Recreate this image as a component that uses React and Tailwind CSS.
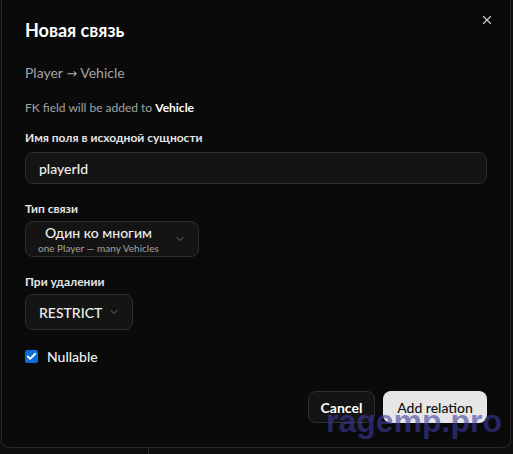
import React from 'react';
import { X, ChevronDown, Check } from 'lucide-react';

const font = { fontFamily: 'Lato, "Noto Sans", sans-serif' };

function SelectBox({ children, className }) {
  return (
    <div className={`flex items-center rounded-lg border border-[#2e2e2e] bg-[#141414] ${className}`}>
      {children}
    </div>
  );
}

export default function App() {
  return (
    <div className="relative w-[513px] h-[454px] overflow-hidden bg-[#0e0e0e] text-white" style={font}>
      <div className="h-[448px] ml-px mr-[2px] rounded-b-lg border-x border-b border-[#2a2a2a] bg-[#0a0a0a] relative">
        <button className="absolute right-[16px] top-[13px] text-[#cfcfcf]">
          <X className="w-[14px] h-[14px]" strokeWidth={2} />
        </button>
        <div className="pl-[23px] pr-[23px] pt-[18px]">
          <h2 className="text-[18px] font-bold leading-6 text-white">Новая связь</h2>
          <p className="mt-[21px] text-[14px] leading-5 text-[#a3a3a3]">
            Player <span style={{ fontFamily: '"DejaVu Sans", sans-serif' }} className="text-[13px]">→</span> Vehicle
          </p>
          <p className="mt-[16px] text-[12px] leading-4 text-[#a3a3a3]">
            FK field will be added to <span className="font-bold text-white">Vehicle</span>
          </p>

          <label className="block mt-[14px] text-[12px] font-bold leading-4 text-[#e5e5e5]">
            Имя поля в исходной сущности
          </label>
          <div className="mt-[6px] flex items-center h-[32px] w-[462px] rounded-lg border border-[#2e2e2e] bg-[#141414] px-[13px] text-[14px] font-medium text-[#f0f0f0]">
            playerId
          </div>

          <label className="block mt-[17px] text-[12px] font-bold leading-4 text-[#e5e5e5]">Тип связи</label>
          <SelectBox className="mt-[4px] w-[174px] h-[36px] pl-[12px] pr-[12px]">
            <div className="flex flex-col items-center leading-none">
              <span className="text-[14px] font-medium text-[#f0f0f0] leading-[16px]">Один ко многим</span>
              <span className="text-[10px] text-[#a3a3a3] leading-[12px] mt-[1px]">one Player — many Vehicles</span>
            </div>
            <ChevronDown className="ml-auto w-[12px] h-[12px] text-[#6b6b6b]" />
          </SelectBox>

          <label className="block mt-[17px] text-[12px] font-bold leading-4 text-[#e5e5e5]">При удалении</label>
          <SelectBox className="mt-[4px] w-[108px] h-[36px] pl-[13px] pr-[12px]">
            <span className="text-[14px] font-medium text-[#f0f0f0]">RESTRICT</span>
            <ChevronDown className="ml-auto w-[12px] h-[12px] text-[#6b6b6b]" />
          </SelectBox>

          <div className="mt-[16px] flex items-center gap-[9px]">
            <span className="flex items-center justify-center w-[13px] h-[13px] rounded-[2px] bg-[#0a6fd8]">
              <Check className="w-[11px] h-[11px] text-white" strokeWidth={4} />
            </span>
            <span className="text-[14px] font-medium text-[#f0f0f0]">Nullable</span>
          </div>

          <div className="mt-[24px] flex justify-end gap-[8px]">
            <button className="h-[32px] w-[67px] rounded-lg border border-[#2e2e2e] bg-[#141414] text-[14px] font-bold text-white">
              Cancel
            </button>
            <button className="h-[32px] w-[104px] rounded-lg bg-[#e6e6e6] text-[14px] font-medium text-[#111]">
              Add relation
            </button>
          </div>
        </div>
      </div>
      <div className="h-[6px] ml-[148px] border-l border-[#2a2a2a]"></div>

      <div className="absolute left-[326px] top-[405px] text-[32px] font-bold leading-none text-[#3c3ca0]/60 pointer-events-none" style={{ fontFamily: '"Liberation Sans", Arial, sans-serif' }}>
        ragemp.pro
      </div>
    </div>
  );
}
